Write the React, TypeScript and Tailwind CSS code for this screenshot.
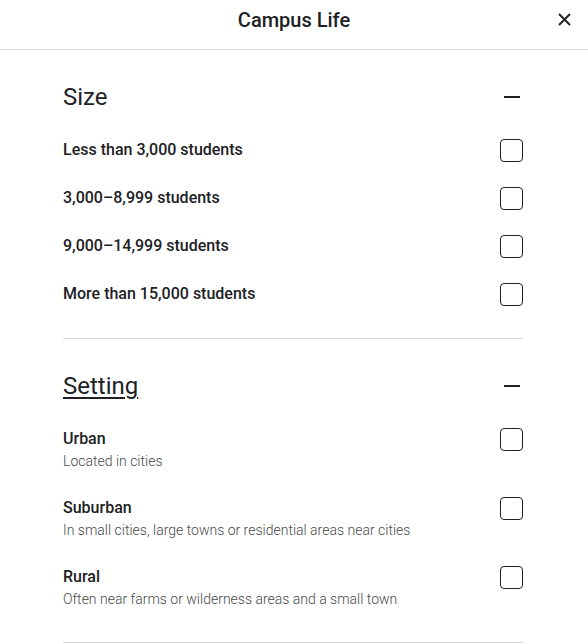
import React from 'react';

const sizes = [
  'Less than 3,000 students',
  '3,000–8,999 students',
  '9,000–14,999 students',
  'More than 15,000 students',
];

const settings = [
  { title: 'Urban', desc: 'Located in cities' },
  { title: 'Suburban', desc: 'In small cities, large towns or residential areas near cities' },
  { title: 'Rural', desc: 'Often near farms or wilderness areas and a small town' },
];

function Checkbox() {
  return <div className="w-[23px] h-[23px] shrink-0 rounded-[4px] border-[1.5px] border-[#222]" />;
}

function SectionHeader({ title, underline }: { title: string; underline?: boolean }) {
  return (
    <div className="flex items-center justify-between h-8">
      <h2
        className={`text-2xl leading-8 font-normal text-[#202124] ${
          underline ? 'underline decoration-2 underline-offset-[3px]' : ''
        }`}
      >
        {title}
      </h2>
      <div className="w-[23px] flex justify-center">
        <div className="w-4 h-[2px] bg-[#202124]" />
      </div>
    </div>
  );
}

export default function App() {
  return (
    <div className="w-[588px] h-[644px] bg-white overflow-hidden" style={{ fontFamily: 'Roboto, "Noto Sans", sans-serif' }}>
      {/* Header */}
      <div className="relative h-[50px] border-b border-[#dadce0] flex justify-center pt-[6px]">
        <h1 className="text-xl leading-7 font-medium text-[#202124]">Campus Life</h1>
        <button className="absolute right-[17px] top-[13px] w-[13px] h-[13px]">
          <svg viewBox="0 0 13 13" width="13" height="13" fill="none" stroke="#202124" strokeWidth="2">
            <line x1="1" y1="1" x2="12" y2="12" />
            <line x1="12" y1="1" x2="1" y2="12" />
          </svg>
        </button>
      </div>

      <div className="w-[460px] ml-[63px]">
        {/* Size */}
        <div className="pt-[31px] pb-[32px] border-b border-[#dadce0]">
          <SectionHeader title="Size" />
          <div className="mt-[25px] flex flex-col gap-6">
            {sizes.map((s) => (
              <div key={s} className="flex items-center justify-between h-6">
                <span className="text-base leading-6 font-medium text-[#202124]">{s}</span>
                <Checkbox />
              </div>
            ))}
          </div>
        </div>

        {/* Setting */}
        <div className="pt-[31px] pb-[32px] border-b border-[#dadce0]">
          <SectionHeader title="Setting" underline />
          <div className="mt-[25px] flex flex-col gap-6">
            {settings.map((s) => (
              <div key={s.title} className="flex items-start justify-between">
                <div>
                  <div className="text-base leading-6 font-medium text-[#202124]">{s.title}</div>
                  <div className="text-sm leading-[21px] font-light text-[#4a4a4a]">{s.desc}</div>
                </div>
                <div className="h-6 flex items-center">
                  <Checkbox />
                </div>
              </div>
            ))}
          </div>
        </div>
      </div>
    </div>
  );
}
